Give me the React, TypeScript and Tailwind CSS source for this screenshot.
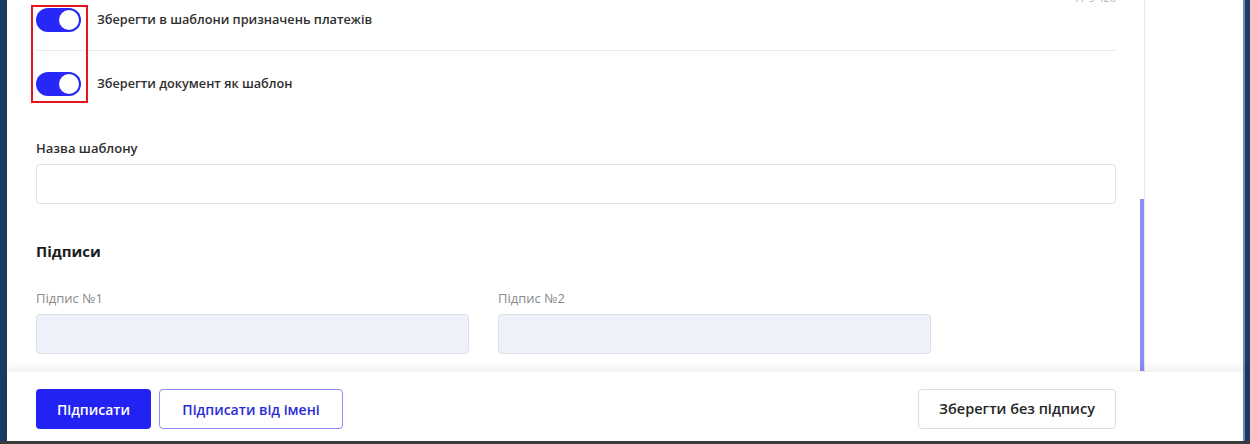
import React from "react";

function Toggle() {
  return (
    <div className="flex h-[24px] w-[45px] items-center justify-end rounded-full bg-[#2727f7] px-[2px]">
      <div className="h-[20px] w-[20px] rounded-full bg-white" />
    </div>
  );
}

function Field({ label, muted }: { label: string; muted?: boolean }) {
  return (
    <div className="flex flex-col">
      <span
        className={
          muted
            ? "h-[18px] text-[13px] leading-[18px] text-[#8a8a8a]"
            : "h-[18px] text-[13px] font-semibold leading-[18px] text-[#2f2f2f]"
        }
      >
        {label}
      </span>
      <div
        className={
          muted
            ? "mt-[7px] h-[40px] rounded-[4px] border border-[#dcdfe6] bg-[#eff2fa]"
            : "mt-[7px] h-[40px] rounded-[4px] border border-[#e3e3e3] bg-white"
        }
      />
    </div>
  );
}

export default function App() {
  return (
    <div
      className="flex h-[444px] w-[1250px] flex-col overflow-hidden bg-[#3b3b3b]"
      style={{ fontFamily: '"Open Sans", "Noto Sans", sans-serif' }}
    >
      <div className="flex h-[441px]">
        {/* left edge of the page behind */}
        <div className="w-[7px] bg-[#1b3a62]" />

        <div className="flex flex-1 flex-col bg-white">
          <div className="flex min-h-0 flex-1">
            {/* scrolling form column */}
            <div className="relative flex-1 overflow-hidden border-r border-[#e6e6e6] pl-[29px] pr-[28px]">
              <div className="-mb-[4px] -mt-[8px] flex h-[12px] items-center justify-end text-[11px] leading-[12px] text-[#b5b5b5]">
                17 з 420
              </div>

              <div className="flex h-[40px] items-center gap-[16px]">
                <Toggle />
                <span className="text-[12.7px] font-semibold text-[#2f2f2f]">
                  Зберегти в шаблони призначень платежів
                </span>
              </div>
              <div className="mt-[10px] h-px bg-[#ececec]" />
              <div className="flex h-[66px] items-center gap-[16px]">
                <Toggle />
                <span className="text-[12.7px] font-semibold text-[#2f2f2f]">
                  Зберегти документ як шаблон
                </span>
              </div>

              <div className="mt-[22px]">
                <Field label="Назва шаблону" />
              </div>

              <h3 className="mt-[37px] h-[20px] text-[15px] font-bold leading-[20px] text-[#1c1c1c]">
                Підписи
              </h3>

              <div className="mt-[28px] grid w-[895px] grid-cols-2 gap-[29px]">
                <Field label="Підпис №1" muted />
                <Field label="Підпис №2" muted />
              </div>

              {/* highlight frame around toggles */}
              <div className="absolute left-[24px] top-[5px] h-[98px] w-[57px] border-2 border-[#e8141b]" />

              {/* scrollbar thumb */}
              <div className="absolute right-[-1px] top-[199px] h-[172px] w-[5px] bg-[#8b8bfa]" />
            </div>

            <div className="w-[98px]" />
          </div>

          <div className="relative flex h-[69px] items-start justify-between bg-white pl-[29px] pr-[127px] pt-[17px] shadow-[0_-5px_8px_rgba(0,0,0,0.06)]">
            <div className="flex gap-[8px]">
              <button className="h-[40px] w-[115px] rounded-[4px] bg-[#2222f2] text-[14px] font-semibold text-white">
                Підписати
              </button>
              <button className="h-[40px] w-[184px] rounded-[4px] border border-[#8d8dff] bg-white text-[14px] font-semibold text-[#2b2bd6]">
                Підписати від імені
              </button>
            </div>
            <button className="h-[40px] w-[198px] rounded-[4px] border border-[#dedede] bg-white text-[14.5px] font-semibold text-[#262626]">
              Зберегти без підпису
            </button>
          </div>
        </div>

        {/* right edge of the page behind */}
        <div className="w-[7px] border-l-2 border-[#6f8bb0] bg-[#1b3a62]" />
      </div>
    </div>
  );
}
